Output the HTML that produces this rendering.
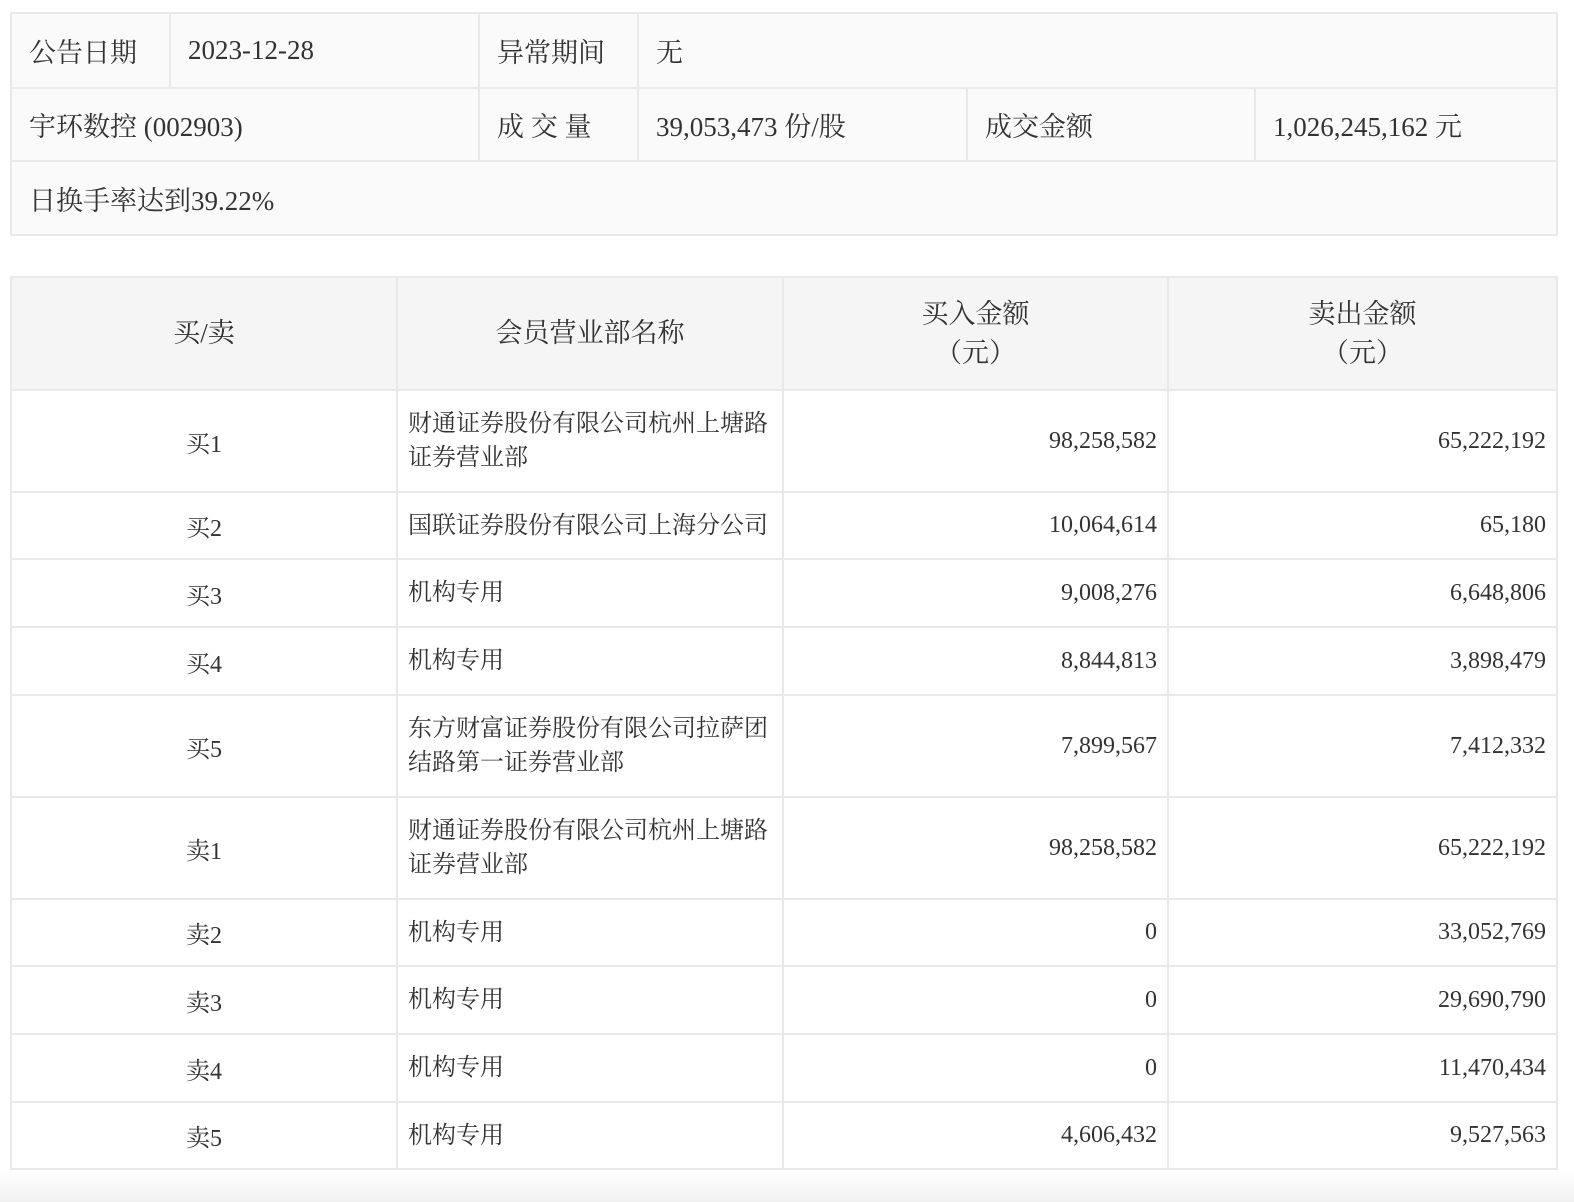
<!DOCTYPE html><html><head><meta charset="utf-8"><style>
body{margin:0;width:1574px;height:1202px;background:#fff;font-family:"Liberation Serif","Noto Serif CJK SC",serif;color:#333;position:relative;overflow:hidden}
.fade{position:absolute;left:0;top:1170px;width:1574px;height:32px;background:linear-gradient(#fff,#f1f1f1)}
table{border-collapse:collapse;position:absolute;left:10px;table-layout:fixed}
td,th{border:2px solid #e9e9e9;padding:0;font-weight:normal}
#t1{top:12px;width:1546px;background:#fafafa;font-size:27px}
#t1 td{padding-left:17px}
#t2{top:276px;width:1546px;font-size:24px}
#t2 th{background:#f5f5f5;font-size:27px;line-height:39px}
#t2 td.c{text-align:center}
#t2 td.n{padding-left:10px;line-height:34px}
#t2 td.r{text-align:right;padding-right:10px}
</style></head><body>
<div class="fade"></div>
<table id="t1">
<colgroup><col style="width:159px"><col style="width:309px"><col style="width:159px"><col style="width:329px"><col style="width:288px"><col style="width:302px"></colgroup>
<tr style="height:75px"><td>公告日期</td><td>2023-12-28</td><td>异常期间</td><td colspan="3">无</td></tr>
<tr style="height:73px"><td colspan="2">宇环数控 (002903)</td><td>成 交 量</td><td>39,053,473 份/股</td><td>成交金额</td><td>1,026,245,162 元</td></tr>
<tr style="height:74px"><td colspan="6">日换手率达到39.22%</td></tr>
</table>
<table id="t2">
<colgroup><col style="width:386px"><col style="width:386px"><col style="width:385px"><col style="width:389px"></colgroup>
<tr style="height:113px"><th>买/卖</th><th>会员营业部名称</th><th>买入金额<br>（元）</th><th>卖出金额<br>（元）</th></tr>
<tr style="height:102px"><td class="c">买1</td><td class="n">财通证券股份有限公司杭州上塘路<br>证券营业部</td><td class="r">98,258,582</td><td class="r">65,222,192</td></tr>
<tr style="height:67px"><td class="c">买2</td><td class="n">国联证券股份有限公司上海分公司</td><td class="r">10,064,614</td><td class="r">65,180</td></tr>
<tr style="height:68px"><td class="c">买3</td><td class="n">机构专用</td><td class="r">9,008,276</td><td class="r">6,648,806</td></tr>
<tr style="height:68px"><td class="c">买4</td><td class="n">机构专用</td><td class="r">8,844,813</td><td class="r">3,898,479</td></tr>
<tr style="height:102px"><td class="c">买5</td><td class="n">东方财富证券股份有限公司拉萨团<br>结路第一证券营业部</td><td class="r">7,899,567</td><td class="r">7,412,332</td></tr>
<tr style="height:102px"><td class="c">卖1</td><td class="n">财通证券股份有限公司杭州上塘路<br>证券营业部</td><td class="r">98,258,582</td><td class="r">65,222,192</td></tr>
<tr style="height:67px"><td class="c">卖2</td><td class="n">机构专用</td><td class="r">0</td><td class="r">33,052,769</td></tr>
<tr style="height:68px"><td class="c">卖3</td><td class="n">机构专用</td><td class="r">0</td><td class="r">29,690,790</td></tr>
<tr style="height:68px"><td class="c">卖4</td><td class="n">机构专用</td><td class="r">0</td><td class="r">11,470,434</td></tr>
<tr style="height:67px"><td class="c">卖5</td><td class="n">机构专用</td><td class="r">4,606,432</td><td class="r">9,527,563</td></tr>
</table>
</body></html>
